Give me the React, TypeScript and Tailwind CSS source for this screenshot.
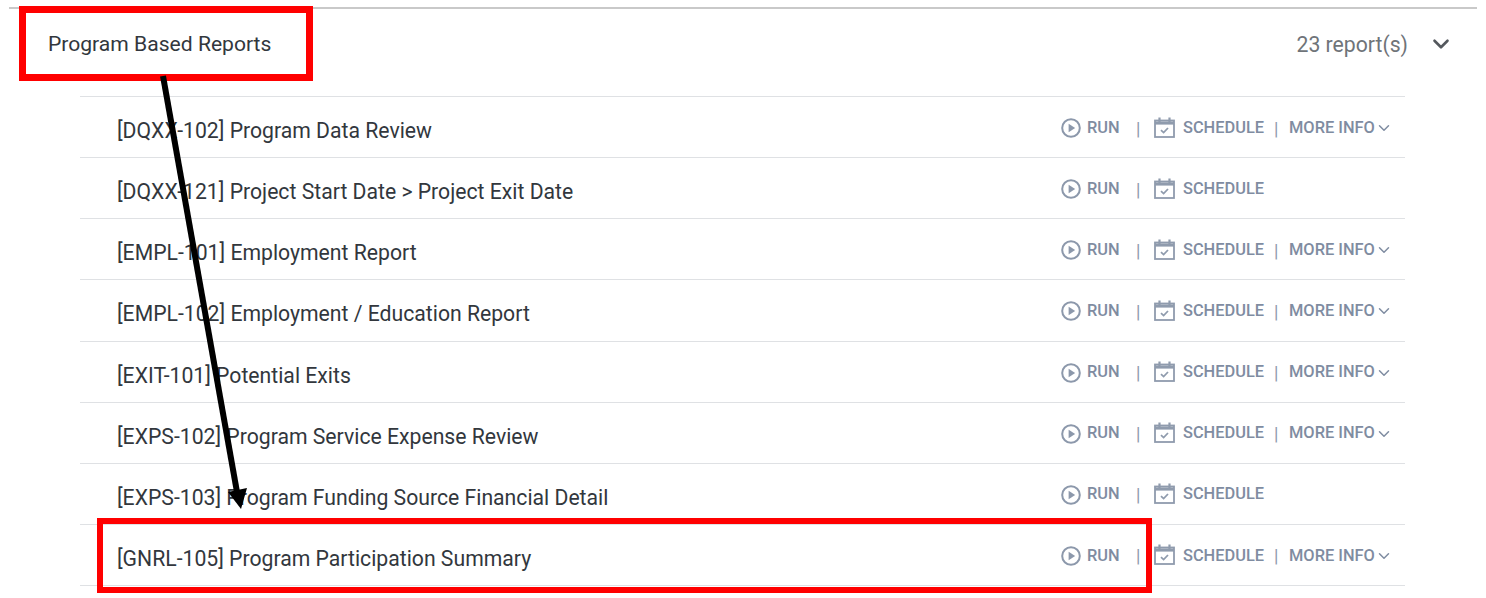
import { ChevronDown } from "lucide-react"

const reports = [
  { title: "[DQXX-102] Program Data Review", more: true },
  { title: "[DQXX-121] Project Start Date > Project Exit Date", more: false },
  { title: "[EMPL-101] Employment Report", more: true },
  { title: "[EMPL-102] Employment / Education Report", more: true },
  { title: "[EXIT-101] Potential Exits", more: true },
  { title: "[EXPS-102] Program Service Expense Review", more: true },
  { title: "[EXPS-103] Program Funding Source Financial Detail", more: false },
  { title: "[GNRL-105] Program Participation Summary", more: true },
]

function PlayIcon() {
  return (
    <svg width="20" height="20" viewBox="0 0 20 20" fill="none" className="shrink-0">
      <circle cx="10" cy="10" r="8.8" stroke="#8c98ab" strokeWidth="2" />
      <path d="M7.6 5.8 L14.2 10 L7.6 14.2 Z" fill="#8c98ab" />
    </svg>
  )
}

function CalendarIcon() {
  return (
    <svg width="21" height="21" viewBox="0 0 21 21" fill="none" className="shrink-0 mb-[2px]">
      <rect x="1" y="3.5" width="19" height="16.5" stroke="#8f9bad" strokeWidth="1.8" />
      <path d="M1 6 H20" stroke="#8f9bad" strokeWidth="3.2" />
      <path d="M5.5 0.5 V5 M15.5 0.5 V5" stroke="#8f9bad" strokeWidth="2.2" />
      <path d="M7 13.2 L9.6 15.6 L14 11" stroke="#8f9bad" strokeWidth="1.8" />
    </svg>
  )
}

function ReportRow({ title, more }: { title: string; more: boolean }) {
  return (
    <div className="h-[61.125px] border-t border-[#dfe1e4] flex justify-between pl-[37px] pr-[12px]">
      <p className="pt-[19px] text-[21.2px] leading-[29px] text-[#32373d]">{title}</p>
      <div className="w-[332px] h-[61px] flex items-center pt-[1px] text-[16.4px] font-medium text-[#7f8ca1]">
        <PlayIcon />
        <span className="ml-[6px] w-[49px]">RUN</span>
        <span className="w-[18px] text-[18px] text-[#8c98ab] font-normal">|</span>
        <CalendarIcon />
        <span className="ml-[8px] w-[91px]">SCHEDULE</span>
        <span className={more ? "flex items-center" : "hidden"}>
          <span className="w-[15px] text-[18px] text-[#8c98ab] font-normal">|</span>
          <span className="whitespace-nowrap">MORE INFO</span>
          <ChevronDown size={18} strokeWidth={2} className="shrink-0" />
        </span>
      </div>
    </div>
  )
}

export default function App() {
  return (
    <main className="relative h-[598px] w-[1486px] overflow-hidden bg-white pt-[7px] font-['Roboto',sans-serif]">
      <div className="mx-[9px] border-t-2 border-[#c9c9c9] h-[89px] flex items-center justify-between pl-[39px] pr-[23px]">
        <h2 className="text-[21.1px] text-[#32373d] pb-[18px]">Program Based Reports</h2>
        <div className="flex items-center gap-[20px] pb-[16px]">
          <span className="text-[21.2px] text-[#6f7479]">23 report(s)</span>
          <ChevronDown size={26} strokeWidth={2.4} className="text-[#54585d]" />
        </div>
      </div>
      <div className="ml-[80px] w-[1325px] border-b border-[#dfe1e4]">
        {reports.map((report) => (
          <ReportRow key={report.title} title={report.title} more={report.more} />
        ))}
      </div>

      {/* annotations drawn over the screenshot */}
      <div className="absolute left-[19px] top-[6px] w-[294px] h-[75px] border-[7px] border-[#ff0000]" />
      <div className="absolute left-[97px] top-[518px] w-[1055px] h-[75px] border-[6px] border-[#ff0000]" />
      <svg className="absolute left-0 top-0" width="1486" height="598" fill="none">
        <path d="M163 76 L237 492" stroke="#000" strokeWidth="6" />
        <path d="M228 492 L247 488 L241 509 Z" fill="#000" />
      </svg>
    </main>
  )
}
